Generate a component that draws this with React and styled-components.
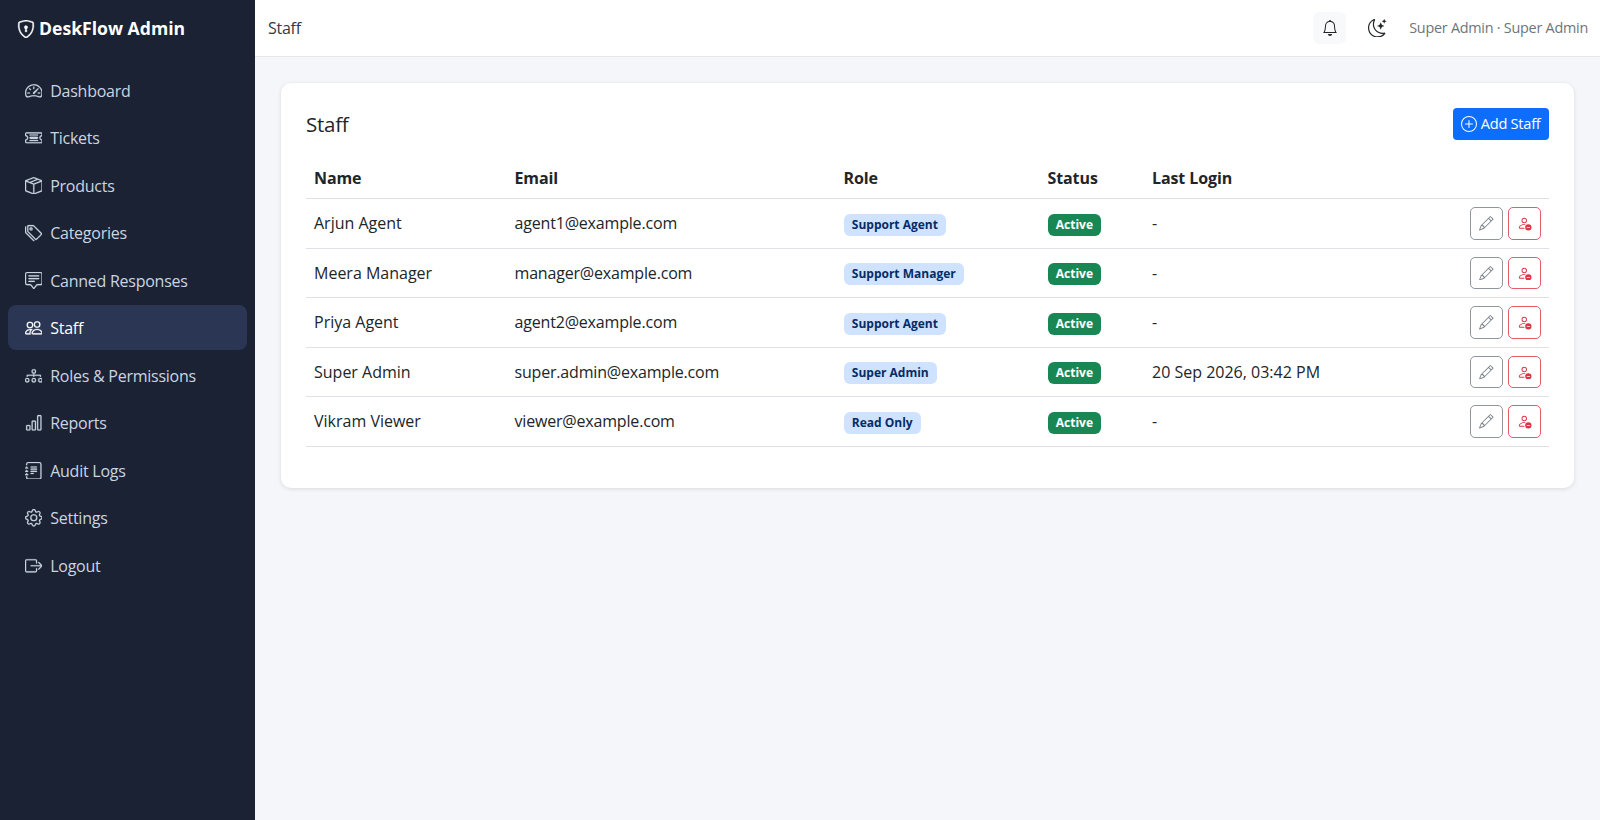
import React from "react";
import styled, { createGlobalStyle } from "styled-components";
import { BsShieldLock, BsSpeedometer2, BsTicketDetailed, BsBoxSeam, BsTags, BsChatSquareText, BsPeople, BsDiagram3, BsBarChart, BsJournalText, BsGear, BsBoxArrowRight, BsBell, BsMoonStars, BsPlusCircle, BsPencil, BsPersonDash } from "react-icons/bs";

const Global = createGlobalStyle`
  html, body { margin: 0; padding: 0; height: 100%; }
  body { font-family: "Open Sans", "Noto Sans", sans-serif; font-size: 16px; line-height: 1.5; letter-spacing: -0.25px; color: #212529; background: #f4f6f9; }
  * { box-sizing: border-box; }
`;
const Shell = styled.div`display: flex; height: 820px; overflow: hidden;`;
const Sidebar = styled.aside`width: 255px; flex: none; background: #1a2233; display: flex; flex-direction: column;`;
const Brand = styled.div`
  height: 57px; display: flex; align-items: center; gap: 4px; padding-left: 17px; color: #fff; font-weight: 700; font-size: 17.6px; letter-spacing: 0;
  svg { stroke: currentColor; stroke-width: 0.35; }
`;
const Nav = styled.nav`display: flex; flex-direction: column; gap: 2.5px; padding: 10.5px 8px 0 8px;`;
const NavItem = styled.a`
  display: flex; align-items: center; gap: 8px; height: 45px; padding: 1px 16.6px 0; border-radius: 8px;
  font-size: 16px; color: ${p => (p.$active ? "#fff" : "#cbd5e1")};
  background: ${p => (p.$active ? "#2a3653" : "transparent")};
  font-weight: ${p => (p.$active ? 500 : 400)};
  svg { font-size: 17.6px; flex: none; stroke: currentColor; stroke-width: 0.2; }
`;
const Content = styled.div`flex: 1; min-width: 0; display: flex; flex-direction: column;`;
const Topbar = styled.header`height: 57px; background: #fff; border-bottom: 1px solid #e5e7eb; display: flex; align-items: center; padding: 0 12px 0 13px; font-size: 16px;`;
const Crumb = styled.div`flex: 1; color: #343a40;`;
const IconButton = styled.button`
  width: 33px; height: 32px; border: 0; border-radius: 6px; padding: 0; display: flex; align-items: center; justify-content: center;
  background: ${p => (p.$tinted ? "#f8f9fa" : "transparent")}; color: #212529; font-size: ${p => p.$size || 16}px;
  margin-right: ${p => p.$mr || 0}px;
`;
const UserLabel = styled.div`color: #6c757d; font-size: 14.4px;`;
const Main = styled.main`padding: 26px; flex: 1;`;
const Card = styled.section`background: #fff; border-radius: 10px; box-shadow: 0 1px 4px rgba(15, 23, 42, .12); padding: 25px 25px 41px;`;
const CardHead = styled.div`display: flex; justify-content: space-between; align-items: center; margin-bottom: 17px;`;
const Title = styled.h1`margin: 0; font-size: 20.5px; font-weight: 500; color: #212529;`;
const AddButton = styled.button`
  display: flex; align-items: center; gap: 3.5px; height: 32px; padding: 0 8.5px; border: 0; border-radius: 4px; background: #0d6efd; color: #fff;
  font: inherit; font-size: 14.6px; letter-spacing: -0.25px;
`;
const Table = styled.table`width: 100%; border-collapse: collapse; table-layout: fixed;`;
const Th = styled.th`text-align: left; font-weight: 700; padding: 8.5px 8px; border-bottom: 1px solid #dee2e6; color: #212529; letter-spacing: -0.1px;`;
const Td = styled.td`padding: 8px; border-bottom: 1px solid #dee2e6; color: #212529; vertical-align: middle; height: 49.4px; letter-spacing: ${p => (p.$tight ? "-0.18px" : "0")};`;
const Badge = styled.span`
  display: inline-block; font-size: 12px; font-weight: 700; line-height: 1; padding: 5px 8.3px; border-radius: 6px; letter-spacing: 0;
  background: ${p => (p.$green ? "#198754" : "#cfe2ff")}; color: ${p => (p.$green ? "#fff" : "#052c65")};
`;
const LastCell = styled.div`display: flex; justify-content: space-between; align-items: center;`;
const Actions = styled.div`display: flex; gap: 5px;`;
const ActionButton = styled.button`
  width: 33px; height: 32.5px; padding: 0; display: flex; align-items: center; justify-content: center; background: #fff; border-radius: 5px; font-size: 14.5px;
  border: 1px solid ${p => (p.$danger ? "#e25c69" : "#8f959b")}; color: ${p => (p.$danger ? "#dc3545" : "#7a828a")};
`;

const navItems = [
  [BsSpeedometer2, "Dashboard"], [BsTicketDetailed, "Tickets"], [BsBoxSeam, "Products"], [BsTags, "Categories"],
  [BsChatSquareText, "Canned Responses"], [BsPeople, "Staff", true], [BsDiagram3, "Roles & Permissions"], [BsBarChart, "Reports"],
  [BsJournalText, "Audit Logs"], [BsGear, "Settings"], [BsBoxArrowRight, "Logout"],
];
const staff = [
  ["Arjun Agent", "agent1@example.com", "Support Agent", "-"],
  ["Meera Manager", "manager@example.com", "Support Manager", "-"],
  ["Priya Agent", "agent2@example.com", "Support Agent", "-"],
  ["Super Admin", "super.admin@example.com", "Super Admin", "20 Sep 2026, 03:42 PM"],
  ["Vikram Viewer", "viewer@example.com", "Read Only", "-"],
];

export default function App() {
  return (
    <>
      <Global />
      <Shell>
        <Sidebar>
          <Brand><BsShieldLock size={18} /> DeskFlow Admin</Brand>
          <Nav>
            {navItems.map(([Icon, label, active]) => (
              <NavItem key={label} $active={active}><Icon />{label}</NavItem>
            ))}
          </Nav>
        </Sidebar>
        <Content>
          <Topbar>
            <Crumb>Staff</Crumb>
            <IconButton $tinted $mr={15}><BsBell /></IconButton>
            <IconButton $size={18.5} $mr={15}><BsMoonStars /></IconButton>
            <UserLabel>Super Admin · Super Admin</UserLabel>
          </Topbar>
          <Main>
            <Card>
              <CardHead>
                <Title>Staff</Title>
                <AddButton><BsPlusCircle size={16} />Add Staff</AddButton>
              </CardHead>
              <Table>
                <colgroup>
                  <col style={{ width: 200.5 }} /><col style={{ width: 329 }} /><col style={{ width: 204 }} /><col style={{ width: 104.5 }} /><col />
                </colgroup>
                <thead>
                  <tr><Th>Name</Th><Th>Email</Th><Th>Role</Th><Th>Status</Th><Th>Last Login</Th></tr>
                </thead>
                <tbody>
                  {staff.map(([name, email, role, last]) => (
                    <tr key={name}>
                      <Td>{name}</Td>
                      <Td $tight>{email}</Td>
                      <Td><Badge>{role}</Badge></Td>
                      <Td><Badge $green>Active</Badge></Td>
                      <Td>
                        <LastCell>
                          <span>{last}</span>
                          <Actions>
                            <ActionButton><BsPencil /></ActionButton>
                            <ActionButton $danger><BsPersonDash /></ActionButton>
                          </Actions>
                        </LastCell>
                      </Td>
                    </tr>
                  ))}
                </tbody>
              </Table>
            </Card>
          </Main>
        </Content>
      </Shell>
    </>
  );
}
